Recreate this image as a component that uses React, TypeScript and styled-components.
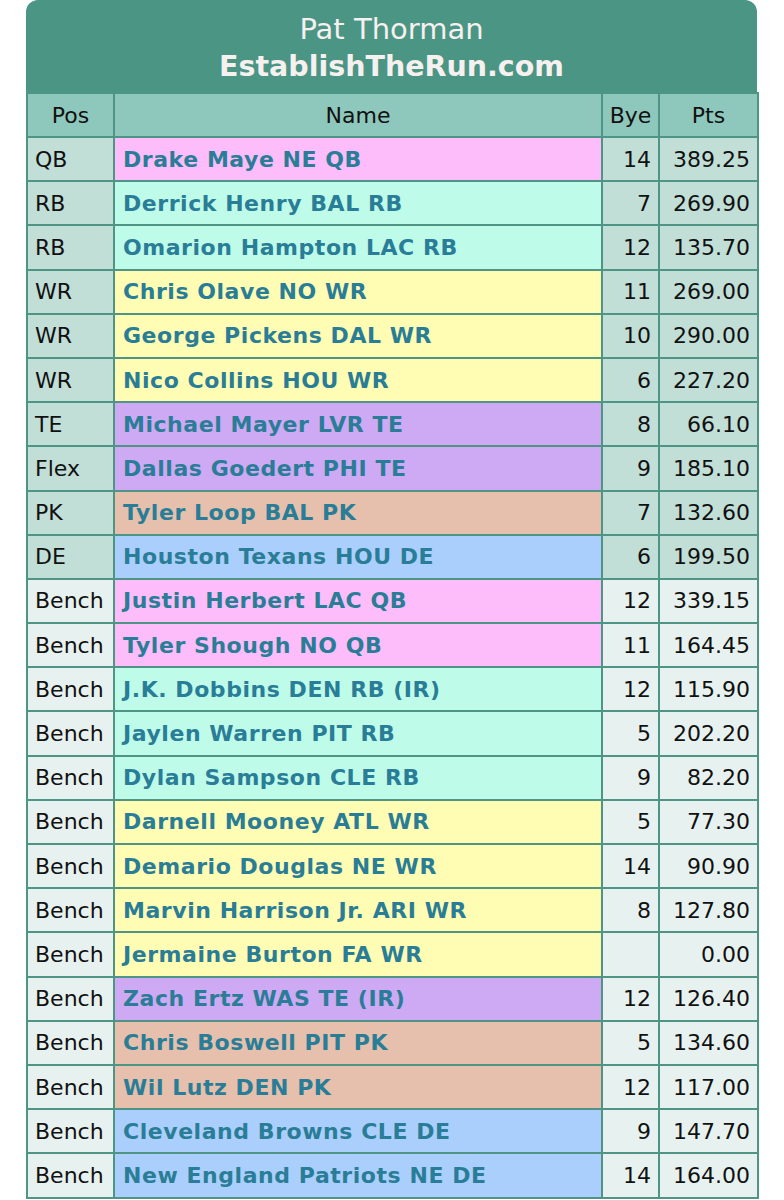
import styled, { createGlobalStyle } from "styled-components";

type Kind = "QB" | "RB" | "WR" | "TE" | "PK" | "DE";

const GlobalStyle = createGlobalStyle`
  body {
    margin: 0;
    background: #ffffff;
    font-family: "DejaVu Sans", Verdana, sans-serif;
  }
`;

const kindColors: Record<Kind, string> = {
  QB: "#fdbdfa",
  RB: "#befbe9",
  WR: "#fffcb3",
  TE: "#cea9f4",
  PK: "#e6c0ad",
  DE: "#abcffc",
};

const roster: { pos: string; name: string; kind: Kind; bye: string; pts: string }[] = [
  { pos: "QB", name: "Drake Maye NE QB", kind: "QB", bye: "14", pts: "389.25" },
  { pos: "RB", name: "Derrick Henry BAL RB", kind: "RB", bye: "7", pts: "269.90" },
  { pos: "RB", name: "Omarion Hampton LAC RB", kind: "RB", bye: "12", pts: "135.70" },
  { pos: "WR", name: "Chris Olave NO WR", kind: "WR", bye: "11", pts: "269.00" },
  { pos: "WR", name: "George Pickens DAL WR", kind: "WR", bye: "10", pts: "290.00" },
  { pos: "WR", name: "Nico Collins HOU WR", kind: "WR", bye: "6", pts: "227.20" },
  { pos: "TE", name: "Michael Mayer LVR TE", kind: "TE", bye: "8", pts: "66.10" },
  { pos: "Flex", name: "Dallas Goedert PHI TE", kind: "TE", bye: "9", pts: "185.10" },
  { pos: "PK", name: "Tyler Loop BAL PK", kind: "PK", bye: "7", pts: "132.60" },
  { pos: "DE", name: "Houston Texans HOU DE", kind: "DE", bye: "6", pts: "199.50" },
  { pos: "Bench", name: "Justin Herbert LAC QB", kind: "QB", bye: "12", pts: "339.15" },
  { pos: "Bench", name: "Tyler Shough NO QB", kind: "QB", bye: "11", pts: "164.45" },
  { pos: "Bench", name: "J.K. Dobbins DEN RB (IR)", kind: "RB", bye: "12", pts: "115.90" },
  { pos: "Bench", name: "Jaylen Warren PIT RB", kind: "RB", bye: "5", pts: "202.20" },
  { pos: "Bench", name: "Dylan Sampson CLE RB", kind: "RB", bye: "9", pts: "82.20" },
  { pos: "Bench", name: "Darnell Mooney ATL WR", kind: "WR", bye: "5", pts: "77.30" },
  { pos: "Bench", name: "Demario Douglas NE WR", kind: "WR", bye: "14", pts: "90.90" },
  { pos: "Bench", name: "Marvin Harrison Jr. ARI WR", kind: "WR", bye: "8", pts: "127.80" },
  { pos: "Bench", name: "Jermaine Burton FA WR", kind: "WR", bye: "", pts: "0.00" },
  { pos: "Bench", name: "Zach Ertz WAS TE (IR)", kind: "TE", bye: "12", pts: "126.40" },
  { pos: "Bench", name: "Chris Boswell PIT PK", kind: "PK", bye: "5", pts: "134.60" },
  { pos: "Bench", name: "Wil Lutz DEN PK", kind: "PK", bye: "12", pts: "117.00" },
  { pos: "Bench", name: "Cleveland Browns CLE DE", kind: "DE", bye: "9", pts: "147.70" },
  { pos: "Bench", name: "New England Patriots NE DE", kind: "DE", bye: "14", pts: "164.00" },
];

const App = () => {
  return (
    <>
      <GlobalStyle />
      <Page>
        <Card>
          <Title>
            <Owner>Pat Thorman</Owner>
            <Site>EstablishTheRun.com</Site>
          </Title>
          <Table>
            <colgroup>
              <col style={{ width: 87 }} />
              <col style={{ width: 488 }} />
              <col style={{ width: 57 }} />
              <col style={{ width: 99 }} />
            </colgroup>
            <thead>
              <tr>
                <Head>Pos</Head>
                <Head>Name</Head>
                <Head>Bye</Head>
                <Head>Pts</Head>
              </tr>
            </thead>
            <tbody>
              {roster.map((p, i) => {
                const bench = p.pos === "Bench";
                return (
                  <tr key={i}>
                    <Cell $bench={bench}>{p.pos}</Cell>
                    <NameCell $kind={p.kind}>{p.name}</NameCell>
                    <NumCell $bench={bench}>{p.bye}</NumCell>
                    <NumCell $bench={bench}>{p.pts}</NumCell>
                  </tr>
                );
              })}
            </tbody>
          </Table>
        </Card>
      </Page>
    </>
  );
};
export default App;

const Page = styled.div`
  padding: 0 26px;
`;

const Card = styled.div`
  width: 731px;
`;

const Title = styled.div`
  background: #4b9585;
  border-radius: 12px 12px 0 0;
  height: 93px;
  display: flex;
  flex-direction: column;
  align-items: center;
  justify-content: center;
  color: #f6f0ee;
  font-size: 29px;
  line-height: 37px;
`;

const Owner = styled.div`
  font-weight: normal;
  margin-top: 3px;
`;

const Site = styled.div`
  font-weight: bold;
  font-size: 28.5px;
`;

const Table = styled.table`
  width: 731px;
  border-collapse: collapse;
  table-layout: fixed;
  font-size: 22px;
  color: #111;
  margin-top: -1px;
`;

const Head = styled.th`
  background: #8ec8bc;
  border: 2px solid #4e9585;
  height: 42px;
  font-weight: normal;
  text-align: center;
  padding: 0;
`;

const Cell = styled.td<{ $bench: boolean }>`
  background: ${({ $bench }) => ($bench ? "#e7f2f0" : "#c1ded7")};
  border: 2px solid #4e9585;
  height: 42.2px;
  padding: 0 0 0 7px;
  white-space: nowrap;
`;

const NameCell = styled.td<{ $kind: Kind }>`
  background: ${({ $kind }) => kindColors[$kind]};
  border: 2px solid #4e9585;
  padding: 0 0 0 8px;
  color: #2a7d96;
  font-weight: bold;
  letter-spacing: 0.55px;
  white-space: nowrap;
`;

const NumCell = styled(Cell)`
  text-align: right;
  padding: 0 7px 0 0;
`;
